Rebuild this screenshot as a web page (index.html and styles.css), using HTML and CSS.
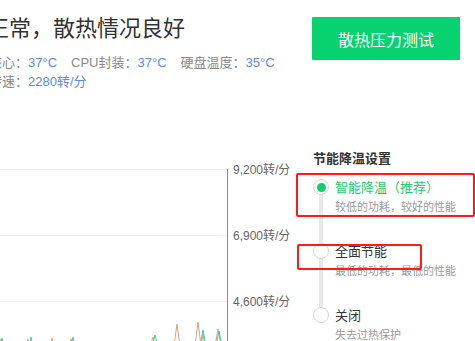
FILE: index.html
```html
<!DOCTYPE html>
<html lang="zh-CN">
<head>
<meta charset="utf-8">
<title>散热</title>
<link rel="stylesheet" href="styles.css">
</head>
<body>
<div class="page">
  <header class="top">
    <div class="status">
      <h1 class="title">正常，散热情况良好</h1>
      <div class="stats">
        <div class="row">
          <span class="item"><span class="lbl">核心：</span><span class="val">37°C</span></span>
          <span class="item"><span class="lbl">CPU封装：</span><span class="val">37°C</span></span>
          <span class="item"><span class="lbl">硬盘温度：</span><span class="val">35°C</span></span>
        </div>
        <div class="row">
          <span class="item"><span class="lbl">转速：</span><span class="val">2280转/分</span></span>
        </div>
      </div>
    </div>
    <button class="btn" type="button">散热压力测试</button>
  </header>

  <section class="main">
    <div class="chart">
      <svg class="chart-svg" width="296" height="191" viewBox="0 0 296 191">
        <g class="grid">
          <line x1="0" y1="18.5" x2="227" y2="18.5"/>
          <line x1="0" y1="84.5" x2="227" y2="84.5"/>
          <line x1="0" y1="150.5" x2="227" y2="150.5"/>
        </g>
        <line class="axis" x1="227.5" y1="18" x2="227.5" y2="191"/>
        <text class="ylabel" x="233" y="23">9,200转/分</text>
        <text class="ylabel" x="233" y="89">6,900转/分</text>
        <text class="ylabel" x="233" y="155">4,600转/分</text>
        <polyline class="s-orange" points="0,195 1,188 3,195 26,195 28,188 30,195 50,195 52,187 54,195 69,195 71,188 73,195 150,195 153,186 156,195 174,195 177,173 180,195 195,195 198,171 201,195 203,183 205,195 215,195 218,178 221,195 227,195"/>
        <polyline class="s-green" points="0,195 2,187 4,195 29,195 31,186 33,195 71,195 73,186 75,195 152,195 155,184 158,195 200,195 203,179 206,195 216,195 219,180 222,195 227,195"/>
      </svg>
    </div>

    <aside class="settings">
      <h2 class="settings-title">节能降温设置</h2>
      <ul class="options">
        <li class="option active">
          <span class="radio"></span>
          <div class="opt-text">
            <div class="opt-label">智能降温（推荐）</div>
            <div class="opt-desc">较低的功耗，较好的性能</div>
          </div>
        </li>
        <li class="option">
          <span class="radio"></span>
          <div class="opt-text">
            <div class="opt-label">全面节能</div>
            <div class="opt-desc">最低的功耗，最低的性能</div>
          </div>
        </li>
        <li class="option">
          <span class="radio"></span>
          <div class="opt-text">
            <div class="opt-label">关闭</div>
            <div class="opt-desc">失去过热保护</div>
          </div>
        </li>
      </ul>
    </aside>
  </section>

  <div class="mark mark-1"></div>
  <div class="mark mark-2"></div>
</div>
</body>
</html>
```

FILE: styles.css
```css
* { box-sizing: border-box; }

html, body {
  margin: 0;
  padding: 0;
  background: #fff;
  overflow: hidden;
}

body {
  font-family: "Liberation Sans", "Noto Sans CJK SC", sans-serif;
  color: #333;
}

.page {
  position: relative;
  width: 475px;
  height: 341px;
  overflow: hidden;
}

.top {
  display: flex;
  justify-content: space-between;
  align-items: flex-start;
  padding-right: 15px;
}

.status {
  margin-left: -11px;
  padding-top: 15px;
}

.title {
  margin: 0 0 0 -2px;
  font-size: 22px;
  line-height: 28px;
  font-weight: normal;
  color: #333;
  white-space: nowrap;
}

.stats {
  margin-top: 10px;
  font-size: 13px;
  line-height: 19px;
}

.row {
  display: flex;
  gap: 14px;
  white-space: nowrap;
}

.lbl { color: #8a8a8a; }
.val { color: #5a8cf0; }

.btn {
  margin-top: 17px;
  width: 148px;
  height: 43px;
  border: 0;
  border-radius: 1px;
  background: #07d270;
  color: #fff;
  font-family: inherit;
  font-size: 16px;
  padding: 0;
}

.main {
  display: flex;
  margin-top: 60px;
}

.chart {
  width: 313px;
  flex: none;
}

.chart-svg { display: block; }

.grid line { stroke: #efefef; stroke-width: 1; }
.axis { stroke: #8c8c8c; stroke-width: 1; }

.ylabel {
  font-family: "Liberation Sans", "Noto Sans CJK SC", sans-serif;
  font-size: 12px;
  fill: #666;
}

.s-orange { fill: none; stroke: #d8a283; stroke-width: 1; }
.s-green { fill: none; stroke: #3fcf9c; stroke-width: 1; }

.settings {
  flex: 1;
  margin-top: -1px;
}

.settings-title {
  margin: 0;
  font-size: 13px;
  line-height: 18px;
  font-weight: bold;
  color: #333;
}

.options {
  position: relative;
  list-style: none;
  margin: 11px 0 0;
  padding: 0;
}

.options::before {
  content: "";
  position: absolute;
  left: 6px;
  top: 8px;
  width: 4px;
  height: 128px;
  background: #e9e9e9;
}

.option {
  position: relative;
  display: flex;
  align-items: flex-start;
  gap: 6px;
  height: 64px;
}

.radio {
  flex: none;
  width: 16px;
  height: 16px;
  margin-top: 0;
  border-radius: 50%;
  border: 1px solid #d6d6d6;
  background: #fff;
  display: flex;
  align-items: center;
  justify-content: center;
}

.option.active .radio::after {
  content: "";
  width: 9px;
  height: 9px;
  border-radius: 50%;
  background: #0fcf6c;
}

.opt-label {
  font-size: 13px;
  line-height: 18px;
  color: #333;
  white-space: nowrap;
}

.option.active .opt-label { color: #1ccb6f; }

.opt-desc {
  margin-top: 1px;
  font-size: 11px;
  line-height: 18px;
  color: #9a9a9a;
  white-space: nowrap;
}

.mark {
  position: absolute;
  border: 2px solid #ff1a1a;
  border-radius: 2px;
}

.mark-1 { left: 296px; top: 173px; width: 179px; height: 44px; }
.mark-2 { left: 297px; top: 244px; width: 125px; height: 26px; }
```
